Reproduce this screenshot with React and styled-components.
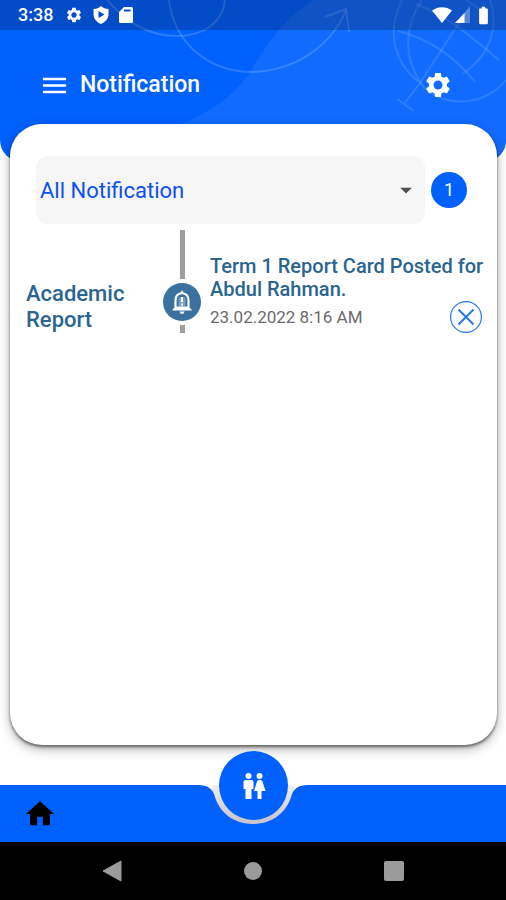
import React from "react";
import styled, { createGlobalStyle } from "styled-components";
import {
  MdSettings,
  MdMenu,
  MdBatteryFull,
  MdArrowDropDown,
  MdHome,
} from "react-icons/md";

const blue = "#0061ff";

const GlobalStyle = createGlobalStyle`
  *, *::before, *::after { box-sizing: border-box; }
  body { margin: 0; background: #fff; font-family: Roboto, "Liberation Sans", sans-serif; }
  button { padding: 0; border: 0; background: none; font: inherit; cursor: pointer; }
  svg { display: block; flex: none; }
  h1, h2, p, ul { margin: 0; padding: 0; }
`;

const Screen = styled.div`
  display: flex;
  flex-direction: column;
  min-height: 100vh;
`;

const Header = styled.header`
  position: relative;
  overflow: hidden;
  padding-bottom: 52px;
  border-radius: 0 0 22px 22px;
  background: ${blue};
  color: #fff;
`;

const Backdrop = styled.svg`
  position: absolute;
  inset: 0;
  width: 100%;
  height: 100%;
`;

const StatusBar = styled.div`
  position: relative;
  display: flex;
  align-items: center;
  justify-content: space-between;
  height: 30px;
  padding: 0 12px 0 18px;
  background: rgba(10, 30, 70, 0.3);
`;

const StatusGroup = styled.div`
  display: flex;
  align-items: center;
  gap: ${({ $gap }) => $gap}px;
`;

const Clock = styled.time`
  margin-right: 2px;
  font-size: 18px;
  font-weight: 500;
  line-height: 30px;
`;

const TitleBar = styled.div`
  position: relative;
  display: flex;
  align-items: center;
  height: 80px;
  padding: 30px 53px 0 39px;
`;

const Title = styled.h1`
  flex: 1;
  margin-left: 10px;
  font-size: 23px;
  font-weight: 500;
  line-height: 28px;
`;

const IconButton = styled.button`
  display: flex;
  color: inherit;
`;

const Card = styled.main`
  position: relative;
  flex: 1;
  margin: -38px 9px 40px 10px;
  padding: 32px 10px 32px 16px;
  border-radius: 32px;
  background: #fff;
  box-shadow: 0 2px 3px rgba(0, 0, 0, 0.5), 0 4px 12px rgba(0, 0, 0, 0.3);
`;

const FilterRow = styled.div`
  display: flex;
  align-items: center;
  gap: 6px;
  padding: 0 20px 0 10px;
`;

const SelectBox = styled.div`
  position: relative;
  flex: 1;
  color: #505050;
  svg {
    position: absolute;
    top: 20px;
    right: 5px;
    pointer-events: none;
  }
`;

const Select = styled.select`
  display: block;
  width: 100%;
  height: 68px;
  padding: 2px 40px 0 4px;
  border: 0;
  border-radius: 12px;
  appearance: none;
  background: #f6f6f6;
  color: #0c50f2;
  font: 400 22px/28px Roboto, "Liberation Sans", sans-serif;
`;

const Count = styled.span`
  width: 36px;
  border-radius: 50%;
  background: ${blue};
  color: #fff;
  font-size: 18px;
  line-height: 36px;
  text-align: center;
`;

const List = styled.ul`
  list-style: none;
`;

const Item = styled.li`
  display: grid;
  grid-template-columns: 137px 38px 1fr;
  margin-top: 6px;
`;

const Category = styled.h2`
  padding: 51px 24px 0 0;
  color: #2a658f;
  font-size: 22px;
  font-weight: 500;
  line-height: 26px;
`;

const Rail = styled.div`
  display: flex;
  flex-direction: column;
  align-items: center;
  gap: 4px;
`;

const RailLine = styled.span`
  width: 5px;
  height: ${({ $length }) => $length}px;
  background: #9e9e9e;
`;

const Bullet = styled.span`
  display: flex;
  align-items: center;
  justify-content: center;
  width: 38px;
  height: 38px;
  border-radius: 50%;
  background: #3b719e;
  color: #fff;
`;

const Details = styled.div`
  padding: 25px 0 0 9px;
`;

const Message = styled.p`
  color: #2a658f;
  font-size: 20px;
  font-weight: 500;
  line-height: 23px;
`;

const Meta = styled.div`
  display: flex;
  align-items: center;
  justify-content: space-between;
  padding-right: 4px;
  color: #6b6b6b;
  font-size: 17px;
  line-height: 20px;
`;

const Dismiss = styled.button`
  color: #2878f0;
`;

const TabBar = styled.nav`
  position: relative;
  display: grid;
  grid-template-columns: 1fr 110px 1fr;
  height: 57px;
`;

const TabSide = styled.div`
  display: flex;
  align-items: center;
  padding-left: 23px;
  background: ${blue};
  color: #000;
`;

const Family = styled.button`
  position: absolute;
  top: -34px;
  left: calc(50% - 34px);
  display: flex;
  align-items: center;
  justify-content: center;
  width: 69px;
  height: 69px;
  border-radius: 50%;
  background: ${blue};
  color: #fff;
`;

const SystemBar = styled.footer`
  display: flex;
  align-items: center;
  justify-content: space-around;
  height: 58px;
  padding: 0 42px;
  background: #000;
  color: #9b9b9b;
`;

function HeaderArt() {
  return (
    <Backdrop viewBox="0 0 506 162" preserveAspectRatio="xMidYMin slice" aria-hidden="true">
      <path d="M182 124C220 108 238 90 252 69C270 38 290 14 314 0H506V162H182Z" fill="#126bff" />
      <g fill="none" stroke="#8fc0ff" strokeOpacity=".3" strokeWidth="2">
        <path d="M107 0C130 26 152 36 177 36C204 36 223 22 225 0" />
        <path d="M169 0C174 42 207 72 253 72C302 70 334 40 346 10" />
        <path d="M325 17L346 9L349 32" />
      </g>
      <g fill="none" stroke="#8fc0ff" strokeOpacity=".22" strokeWidth="2">
        <path d="M402 0C388 28 391 60 419 82" />
        <path d="M422 0C402 30 405 62 422 84" />
        <path d="M490 0C500 28 488 58 463 73" />
        <path d="M420 83C442 110 486 106 506 80" />
        <path d="M470 6L420 83L404 104M397 99L414 111" />
        <path d="M398 31C430 39 455 57 475 82" />
        <path d="M416 4C450 17 476 41 499 60" />
        <path d="M466 0L481 10" />
      </g>
    </Backdrop>
  );
}

function ShieldIcon() {
  return (
    <svg width="16" height="18" viewBox="0 0 16 18" aria-hidden="true">
      <path
        fillRule="evenodd"
        fill="currentColor"
        d="M8 0C6 2 3.5 3 .5 3V8C.5 13 4 16.2 8 18C12 16.2 15.500 13 15.500 8V3C12.500 3 10 2 8 0ZM5.500 5L11.500 8.500L5.500 12Z"
      />
    </svg>
  );
}

function CardIcon() {
  return (
    <svg width="14" height="16" viewBox="0 0 14 16" aria-hidden="true">
      <path
        fillRule="evenodd"
        fill="currentColor"
        d="M5 0H12.500Q14 0 14 1.500V14.500Q14 16 12.500 16H1.500Q0 16 0 14.500V5ZM5 2.500V4.500H11.500V2.500Z"
      />
    </svg>
  );
}

function WifiIcon() {
  return (
    <svg width="20" height="16" viewBox="0 0 20 16" aria-hidden="true">
      <path d="M0 3.500C6 -1 14 -1 20 3.500L10 16Z" fill="currentColor" />
    </svg>
  );
}

function SignalIcon() {
  return (
    <svg width="15" height="16" viewBox="0 0 15 16" fill="currentColor" aria-hidden="true">
      <path d="M0 16L15 0V16Z" opacity=".3" />
      <path d="M0 16L9.500 6V16Z" />
    </svg>
  );
}

function BellIcon() {
  return (
    <svg width="22" height="26" viewBox="0 0 22 26" aria-hidden="true">
      <path
        d="M4.500 18.500V11.500C4.500 7.500 7 4.500 11 4C15 4.500 17.500 7.500 17.500 11.500V18.500"
        fill="none"
        stroke="currentColor"
        strokeWidth="2.200"
      />
      <path
        d="M11 1L13 4.500H9ZM1.500 20.500L4.500 17.500H17.500L20.500 20.500V21.500H1.500ZM8.500 22.500H13.500Q13 25 11 25Q9 25 8.500 22.500Z"
        fill="currentColor"
      />
      <rect x="7.500" y="8" width="7" height="9.500" rx="2" fill="currentColor" opacity=".35" />
      <path d="M10 8H12V13H10ZM10 14.500H12V16.500H10Z" fill="currentColor" />
    </svg>
  );
}

function FamilyIcon() {
  return (
    <svg width="24" height="28" viewBox="0 0 24 28" fill="currentColor" aria-hidden="true">
      <circle cx="6.500" cy="4" r="3" />
      <path d="M3.500 8H9.500Q11.500 8 11.500 10V17H9.500V27H3.500V17H1.500V10Q1.500 8 3.500 8Z" />
      <circle cx="17.500" cy="4" r="3" />
      <path d="M16.500 8H18.500Q20 8 20.500 9.500L23.500 19H19.500V27H15.500V19H12L15 9.500Q15.500 8 16.500 8Z" />
    </svg>
  );
}

function CloseIcon() {
  return (
    <svg width="34" height="32" viewBox="0 1 34 32" fill="none" stroke="currentColor" aria-hidden="true">
      <circle cx="17" cy="17" r="15.400" strokeWidth="1.200" />
      <path d="M9.500 9.500L24.500 24.500M24.500 9.500L9.500 24.500" strokeWidth="2" />
    </svg>
  );
}

function Notch() {
  return (
    <svg width="110" height="57" viewBox="0 0 110 57" aria-hidden="true">
      <defs>
        <linearGradient id="notchShade" x1="0" y1="0" x2="0" y2="1">
          <stop offset="0" stopColor="#f1eff2" />
          <stop offset=".6" stopColor="#cbc7ce" />
        </linearGradient>
      </defs>
      <path d="M14 0H96V57H14Z" fill="url(#notchShade)" />
      <path
        d="M0 0C10 0 14 4 16 9C21 28 36 39 55 39C74 39 89 28 94 9C96 4 100 0 110 0V57H0Z"
        fill={blue}
      />
    </svg>
  );
}

export default function App() {
  return (
    <>
      <GlobalStyle />
      <Screen>
        <Header>
          <HeaderArt />
          <StatusBar>
            <StatusGroup $gap={10}>
              <Clock>3:38</Clock>
              <MdSettings size={18} />
              <ShieldIcon />
              <CardIcon />
            </StatusGroup>
            <StatusGroup $gap={3}>
              <WifiIcon />
              <SignalIcon />
              <MdBatteryFull size={21} />
            </StatusGroup>
          </StatusBar>
          <TitleBar>
            <IconButton aria-label="Open menu">
              <MdMenu size={31} />
            </IconButton>
            <Title>Notification</Title>
            <IconButton aria-label="Settings">
              <MdSettings size={30} />
            </IconButton>
          </TitleBar>
        </Header>

        <Card>
          <FilterRow>
            <SelectBox>
              <Select aria-label="Notification type" defaultValue="all">
                <option value="all">All Notification</option>
              </Select>
              <MdArrowDropDown size={28} />
            </SelectBox>
            <Count>1</Count>
          </FilterRow>
          <List>
            <Item>
              <Category>Academic Report</Category>
              <Rail>
                <RailLine $length={49} />
                <Bullet>
                  <BellIcon />
                </Bullet>
                <RailLine $length={8} />
              </Rail>
              <Details>
                <Message>Term 1 Report Card Posted for Abdul Rahman.</Message>
                <Meta>
                  <time dateTime="2022-02-23T08:16">23.02.2022 8:16 AM</time>
                  <Dismiss aria-label="Dismiss notification">
                    <CloseIcon />
                  </Dismiss>
                </Meta>
              </Details>
            </Item>
          </List>
        </Card>

        <TabBar>
          <TabSide>
            <IconButton aria-label="Home">
              <MdHome size={34} />
            </IconButton>
          </TabSide>
          <Notch />
          <TabSide />
          <Family aria-label="Students">
            <FamilyIcon />
          </Family>
        </TabBar>

        <SystemBar>
          <IconButton aria-label="Back">
            <svg width="20" height="22" viewBox="0 0 20 22" aria-hidden="true">
              <path d="M19 1V21L1 11Z" fill="currentColor" stroke="currentColor" strokeLinejoin="round" />
            </svg>
          </IconButton>
          <IconButton aria-label="Home screen">
            <svg width="20" height="20" viewBox="0 0 20 20" aria-hidden="true">
              <circle cx="10" cy="10" r="9" fill="currentColor" />
            </svg>
          </IconButton>
          <IconButton aria-label="Recent apps">
            <svg width="20" height="20" viewBox="0 0 20 20" aria-hidden="true">
              <rect width="20" height="20" rx="2" fill="currentColor" />
            </svg>
          </IconButton>
        </SystemBar>
      </Screen>
    </>
  );
}
